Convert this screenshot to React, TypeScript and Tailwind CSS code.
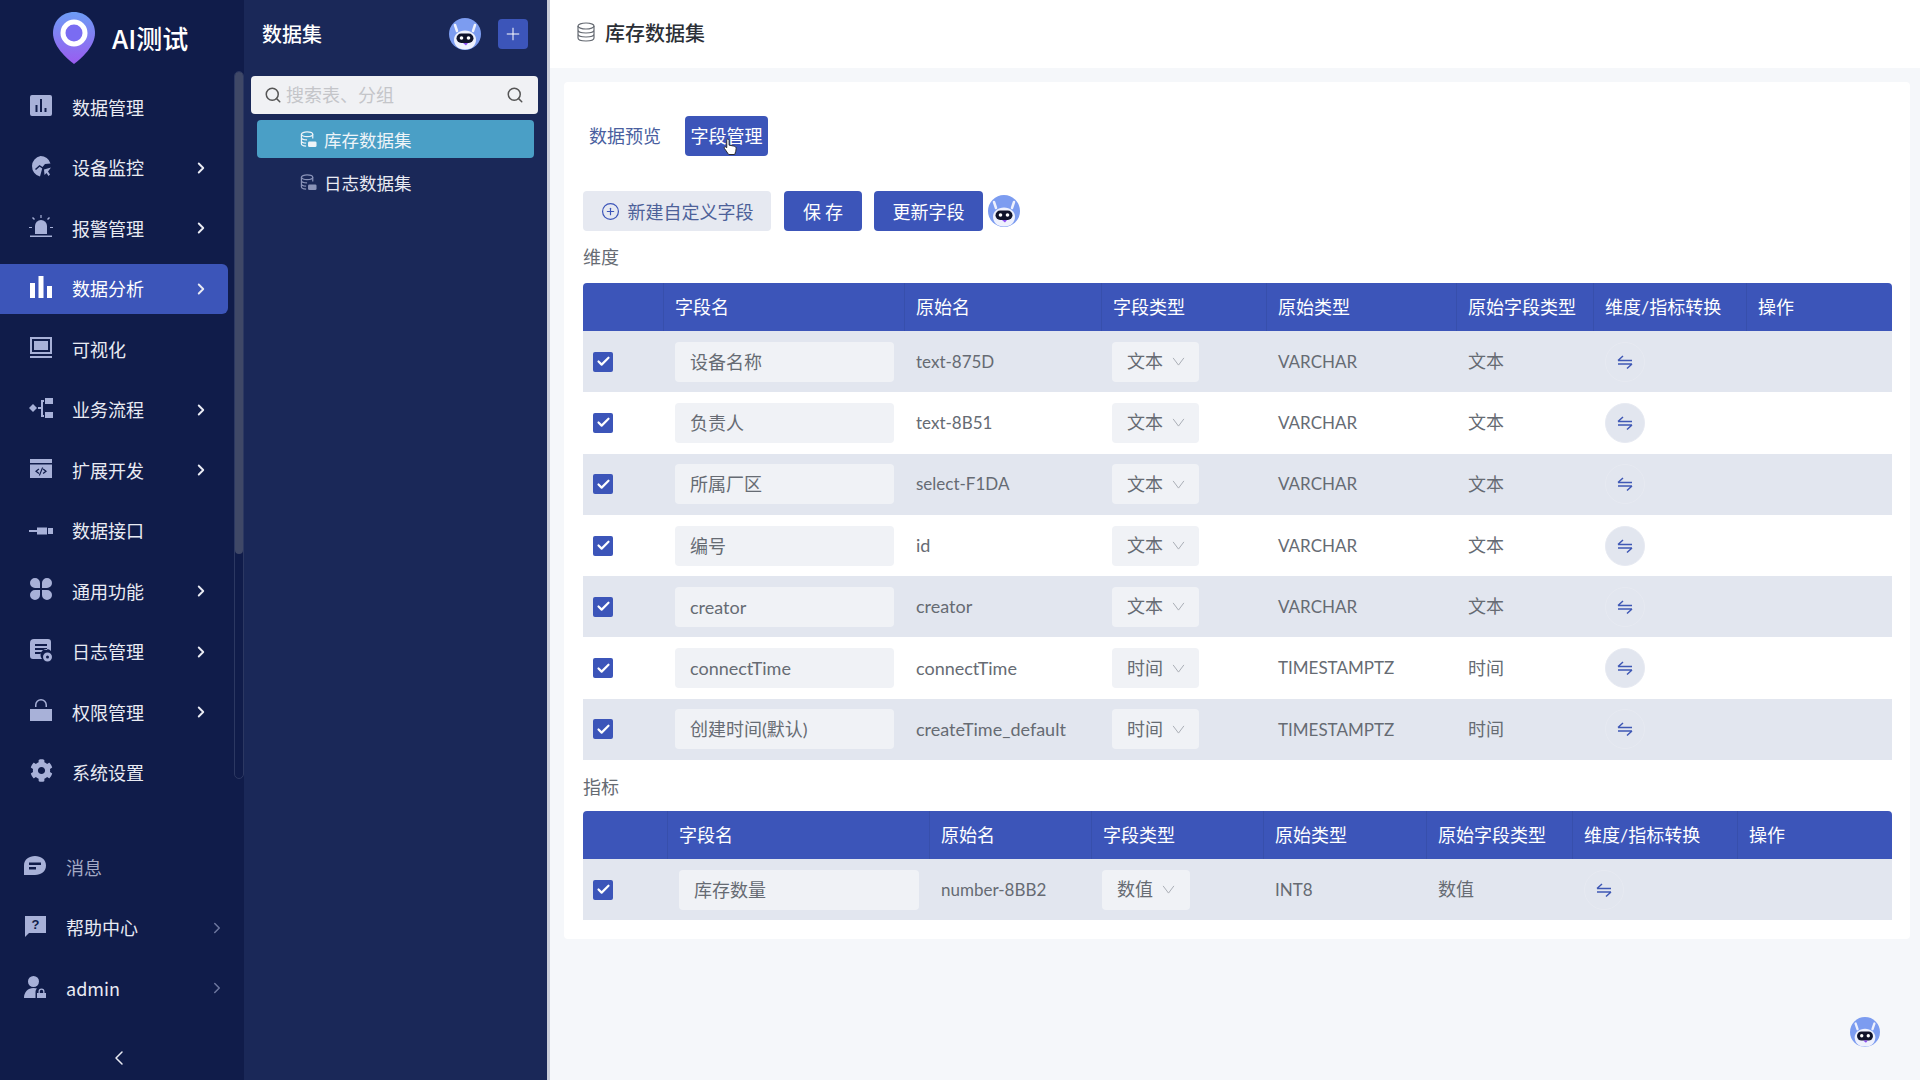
import { Check, ChevronLeft, ChevronRight, CirclePlus, Plus, Search } from "lucide-react";
import { FaCog } from "react-icons/fa";
import type { ReactNode } from "react";

const iconProps = { viewBox: "0 0 24 24", fill: "currentColor", className: "w-[24px] h-[24px]" };

const icons: Record<string, ReactNode> = {
  data: (
    <svg {...iconProps}>
      <path fillRule="evenodd" d="M3 2h18a2 2 0 0 1 2 2v17a2 2 0 0 1-2 2H3a2 2 0 0 1-2-2V4a2 2 0 0 1 2-2Zm3.500 10v7h2v-7Zm4.500-6v13h2V6Zm4.500 9v4h2v-4Z" />
    </svg>
  ),
  monitor: (
    <svg {...iconProps}>
      <path d="M11.500 2a10.500 10.500 0 0 1 10 7.500L16 10l-2.500 3-3-2L6 15l1 1 3.700-3.300 2.500 1.700L11 22.500A10.500 10.500 0 0 1 11.500 2Z" />
      <path d="M15 15.500l7-2-3 4 2 3-1.500 1.500-2-3-2 2Z" />
    </svg>
  ),
  alarm: (
    <svg {...iconProps}>
      <path d="M6 20v-8a6 6 0 0 1 12 0v8Z" />
      <path d="M1 21.500h22V23H1ZM11.400 1h1.200v3h-1.200ZM3 4l1-1 2 2-1 1ZM21 4l-1-1-2 2 1 1ZM0 13h3v1H0ZM21 13h3v1h-3Z" />
    </svg>
  ),
  analysis: (
    <svg {...iconProps}>
      <path d="M1 8h5v15H1ZM9.500 1h5v22h-5ZM18 11h5v12h-5Z" />
    </svg>
  ),
  visual: (
    <svg {...iconProps}>
      <path fillRule="evenodd" d="M1 2h22v17H1Zm2 2v13h18V4Zm2 2h14v9H5ZM1 21h22v2H1Z" />
    </svg>
  ),
  flow: (
    <svg {...iconProps}>
      <path d="M0 12l4-4 4 4-4 4ZM16 2h8v6h-8ZM16 16h8v6h-8Z" />
      <path d="M9 11h3V4h3v2h-1v5h0v2h0v6h1v2h-3v-8H9Z" />
    </svg>
  ),
  ext: (
    <svg {...iconProps}>
      <path fillRule="evenodd" d="M1 3h22v4H1Zm0 5.500h22V22H1Zm8.500 4L6 15.250 9.500 18l.8-1-2.300-1.750L10.300 13.500Zm5 0-.8 1 2.300 1.750-2.300 1.750.8 1 3.500-2.750ZM13 11.500l-3.200 8h1.200l3.200-8Z" />
    </svg>
  ),
  api: (
    <svg {...iconProps}>
      <path d="M0 13h8v2H0ZM8 10.500h10v7H8ZM19 11h5v6h-5Z" />
    </svg>
  ),
  common: (
    <svg {...iconProps}>
      <path d="M6 1a5 5 0 0 1 5 5v5H6A5 5 0 0 1 6 1ZM18 1a5 5 0 0 1 0 10h-5V6a5 5 0 0 1 5-5ZM6 13h5v5a5 5 0 1 1-5-5ZM13 13h5a5 5 0 1 1-5 5Z" />
    </svg>
  ),
  log: (
    <svg {...iconProps}>
      <path fillRule="evenodd" d="M5 1h14a3 3 0 0 1 3 3v9a6 6 0 0 0-9 8H4a3 3 0 0 1-3-3V5a4 4 0 0 1 4-4Zm1 5v2h12V6Zm0 4v2h12v-2Zm0 4v2h6v-2Z" />
      <path fillRule="evenodd" d="M18.500 14.500a4.500 4.500 0 1 1 0 9 4.500 4.500 0 0 1 0-9Zm0 3a1.500 1.500 0 1 0 0 3 1.500 1.500 0 0 0 0-3Z" />
    </svg>
  ),
  perm: (
    <svg {...iconProps}>
      <path d="M1 11h22v12H1Z" />
      <path d="M6 9V7a6 6 0 0 1 12 0v2h-1.500V7a4.500 4.500 0 0 0-9 0v2Z" />
    </svg>
  ),
  settings: <FaCog className="w-[23px] h-[23px]" />,
  msg: (
    <svg {...iconProps}>
      <path fillRule="evenodd" d="M12 2c6 0 11 3.500 11 9.500S18 21 12 21H1v-9.500C1 5.500 6 2 12 2ZM6 8.500V11h12V8.500Zm0 4.500v2.500h7V13Z" />
    </svg>
  ),
  help: (
    <svg {...iconProps}>
      <path d="M2 2h21v17H6l-4 4Z" />
      <text x="12.500" y="15" textAnchor="middle" fontSize="13" fontWeight="700" fill="#101c4a" fontFamily="Liberation Sans">?</text>
    </svg>
  ),
  admin: (
    <svg {...iconProps}>
      <circle cx="10.500" cy="6.500" r="5.500" />
      <path d="M1 23c0-6 4-10 9.500-10 1.500 0 2.500.2 3.500.6-1 1-1.500 2-1.500 3.400V23Z" />
      <path fillRule="evenodd" d="M14 18h9v5h-9Zm1.500 0v-1.500a3 3 0 0 1 6 0V18h-1.300v-1.500a1.700 1.700 0 0 0-3.400 0V18Z" />
    </svg>
  ),
};

function Logo() {
  return (
    <svg viewBox="0 0 42 52" className="w-[42px] h-[52px]">
      <defs>
        <linearGradient id="pinFill" x1="0" y1="0" x2="0" y2="1">
          <stop offset="0" stopColor="#6d9cf5" />
          <stop offset="1" stopColor="#9a5cf0" />
        </linearGradient>
      </defs>
      <path d="M21 0c12 0 21 9 21 21 0 13-13 25-21 31C13 46 0 34 0 21 0 9 9 0 21 0Z" fill="url(#pinFill)" />
      <circle cx="21" cy="21" r="11" fill="#7a6cf2" stroke="#ffffff" strokeWidth="5" />
    </svg>
  );
}

function Robot({ size = "w-[32px] h-[32px]" }: { size?: string }) {
  return (
    <svg viewBox="0 0 32 32" className={size}>
      <circle cx="16" cy="16" r="16" fill="#7c9cf0" />
      <path d="M16 31.500c-7 0-11-4-11-10 0-5 5-9 11-9s11 4 11 9c0 6-4 10-11 10Z" fill="#eef1fd" />
      <path d="M8 13 6 7M24 13l2-6" stroke="#eef1fd" strokeWidth="2.500" strokeLinecap="round" />
      <rect x="7.500" y="15.500" width="17" height="9.500" rx="4.700" fill="#10132a" />
      <path d="M14 25h5l-2 2.500Z" fill="#8a4df0" />
      <circle cx="12.500" cy="20" r="1.800" fill="#ffffff" />
      <circle cx="19.500" cy="20" r="1.800" fill="#ffffff" />
    </svg>
  );
}

function DbIcon({ className }: { className: string }) {
  return (
    <svg viewBox="0 0 18 18" fill="none" stroke="currentColor" strokeWidth="1.300" className={className}>
      <ellipse cx="7.500" cy="3.500" rx="6" ry="2.500" />
      <path d="M1.500 3.500v10c0 1.300 2.200 2.300 5 2.500M13.500 3.500V8M1.500 7c0 1.400 2.700 2.500 6 2.500M1.500 10.500c0 1.300 2 2.200 5 2.400" />
      <rect x="8.500" y="11" width="9" height="6" rx="1.500" fill="currentColor" stroke="none" />
    </svg>
  );
}

function SwapIcon() {
  return (
    <svg viewBox="0 0 16 16" fill="none" stroke="#3f58b5" strokeWidth="1.500" className="w-[16px] h-[16px]">
      <path d="M1 6.500h14M1 6.500 6 2M15 10H1M15 10l-5 4.500" />
    </svg>
  );
}

const menu = [
  { label: "数据管理", icon: "data" },
  { label: "设备监控", icon: "monitor", arrow: true },
  { label: "报警管理", icon: "alarm", arrow: true },
  { label: "数据分析", icon: "analysis", arrow: true, active: true },
  { label: "可视化", icon: "visual" },
  { label: "业务流程", icon: "flow", arrow: true },
  { label: "扩展开发", icon: "ext", arrow: true },
  { label: "数据接口", icon: "api" },
  { label: "通用功能", icon: "common", arrow: true },
  { label: "日志管理", icon: "log", arrow: true },
  { label: "权限管理", icon: "perm", arrow: true },
  { label: "系统设置", icon: "settings" },
];

const bottomMenu = [
  { label: "消息", icon: "msg", dim: true },
  { label: "帮助中心", icon: "help", arrow: true },
  { label: "admin", icon: "admin", arrow: true },
];

function Sidebar() {
  return (
    <aside className="relative w-[244px] shrink-0 h-full bg-[#101c4a] flex flex-col">
      <div className="h-[77px] pl-[53px] pt-[12px] flex items-start gap-[17px]">
        <Logo />
        <span className="mt-[9px] text-[26px] leading-[34px] font-medium text-white">AI测试</span>
      </div>

      {menu.map((m) => (
        <div key={m.label} className="h-[60.5px] flex items-center">
          <div
            className={
              "w-[228px] h-[50px] pl-[29px] pr-[18px] flex items-center rounded-r-md " +
              (m.active ? "bg-[#3c55b9] text-white" : "text-[#a8b1d8]")
            }
          >
            <span className="w-[24px] pb-[4px] flex justify-center">{icons[m.icon]}</span>
            <span className={"ml-[19px] flex-1 text-[18px] " + (m.active ? "text-white" : "text-[#e9ebf3]")}>{m.label}</span>
            {m.arrow && <ChevronRight className="w-[18px] h-[18px] text-[#e9ebf3]" strokeWidth={2.5} />}
          </div>
        </div>
      ))}

      <div className="mt-[34px]">
        {bottomMenu.map((m) => (
          <div key={m.label} className="h-[60.5px] pl-[23px] pr-[18px] flex items-center text-[#a8b1d8]">
            <span className="w-[24px] pb-[3px] flex justify-center">{icons[m.icon]}</span>
            <span className={"ml-[19px] flex-1 text-[18px] " + (m.dim ? "text-[#a3a9c4] text-[17px]" : "text-[#e9ebf3]")}>{m.label}</span>
            {m.arrow && <ChevronRight className="w-[18px] h-[18px] text-[#6d779f]" />}
          </div>
        ))}
      </div>

      <div className="mt-[27px] flex justify-center pr-[6px]">
        <ChevronLeft className="w-[24px] h-[24px] text-[#e9ebf3]" strokeWidth={1.5} />
      </div>

      {/* scrollbar sits on top of the menu */}
      <div className="absolute left-[234px] top-[71px] w-[10px] h-[708px] rounded-full border border-[#2c3862]">
        <div className="w-full h-[482px] rounded-full bg-[#3f4867]" />
      </div>
    </aside>
  );
}

function DatasetPanel() {
  return (
    <section className="w-[303px] shrink-0 h-full bg-[#1a2858] flex flex-col">
      <div className="h-[76px] pl-[18px] pr-[19px] flex items-center pb-[8px]">
        <span className="flex-1 text-[20px] font-medium text-white">数据集</span>
        <Robot />
        <button className="ml-[17px] w-[30px] h-[30px] rounded bg-[#3c55b9] flex items-center justify-center">
          <Plus className="w-[20px] h-[20px] text-white" strokeWidth={1.2} />
        </button>
      </div>
      <div className="ml-[7px] mr-[9px] h-[38px] rounded bg-[#f0f1f4] flex items-center pl-[13px] pr-[14px]">
        <Search className="w-[18px] h-[18px] text-[#555555]" />
        <span className="ml-[4px] pb-[2px] flex-1 text-[18px] text-[#c4c5c9]">搜索表、分组</span>
        <Search className="w-[18px] h-[18px] text-[#555555]" />
      </div>
      <div className="mt-[6px] mx-[13px] h-[38px] rounded bg-[#4a9fc6] pl-[43px] flex items-center text-[#eef4f8]">
        <DbIcon className="w-[17px] h-[17px]" />
        <span className="ml-[7px] pt-[2px] text-[17.500px]">库存数据集</span>
      </div>
      <div className="mt-[5px] mx-[13px] h-[38px] pl-[43px] flex items-center text-[#8a93b8]">
        <DbIcon className="w-[17px] h-[17px]" />
        <span className="ml-[7px] pt-[2px] text-[17.500px] text-[#e9ebf3]">日志数据集</span>
      </div>
    </section>
  );
}

type Field = { name: string; origin: string; type: string; rawType: string; rawFieldType: string };

const dimensions: Field[] = [
  { name: "设备名称", origin: "text-875D", type: "文本", rawType: "VARCHAR", rawFieldType: "文本" },
  { name: "负责人", origin: "text-8B51", type: "文本", rawType: "VARCHAR", rawFieldType: "文本" },
  { name: "所属厂区", origin: "select-F1DA", type: "文本", rawType: "VARCHAR", rawFieldType: "文本" },
  { name: "编号", origin: "id", type: "文本", rawType: "VARCHAR", rawFieldType: "文本" },
  { name: "creator", origin: "creator", type: "文本", rawType: "VARCHAR", rawFieldType: "文本" },
  { name: "connectTime", origin: "connectTime", type: "时间", rawType: "TIMESTAMPTZ", rawFieldType: "时间" },
  { name: "创建时间(默认)", origin: "createTime_default", type: "时间", rawType: "TIMESTAMPTZ", rawFieldType: "时间" },
];

const measures: Field[] = [
  { name: "库存数量", origin: "number-8BB2", type: "数值", rawType: "INT8", rawFieldType: "数值" },
];

const headers = ["", "字段名", "原始名", "字段类型", "原始类型", "原始字段类型", "维度/指标转换", "操作"];

function FieldTable({ rows, cols, selectW }: { rows: Field[]; cols: string; selectW: string }) {
  return (
    <div className="text-[18px] text-[#666b73] font-['Lato','Noto_Sans_CJK_SC',sans-serif]">
      <div className={"grid h-[48px] rounded-t bg-[#3c55b9] text-white items-center " + cols}>
        {headers.map((h, i) => (
          <div key={i} className="h-full pl-[11px] leading-[48px] whitespace-nowrap border-r border-[#374fac] last:border-r-0">{h}</div>
        ))}
      </div>
      {rows.map((r, i) => (
        <div key={r.name} className={"grid h-[61.300px] items-center " + cols + (i % 2 === 0 ? " bg-[#e2e6ef]" : " bg-white")}>
          <div className="pl-[10px]">
            <span className="w-[20px] h-[20px] rounded-[2px] bg-[#3c55b9] flex items-center justify-center">
              <Check className="w-[15px] h-[15px] text-white" strokeWidth={3.5} />
            </span>
          </div>
          <div className="px-[11px]">
            <div className="h-[40px] pl-[15px] rounded bg-[#f0f2f6] leading-[40px]">{r.name}</div>
          </div>
          {/* names with a code in them run a bit narrower in the picture */}
          <div className={"pl-[11px] whitespace-nowrap " + (r.origin.includes("-") ? "text-[17px]" : "")}>{r.origin}</div>
          <div className="pl-[10px]">
            <div className={"h-[40px] rounded bg-[#f0f2f6] pl-[15px] flex items-center gap-[9px] " + selectW}>
              {r.type}
              <svg viewBox="0 0 14 10" fill="none" stroke="#a9adb5" strokeWidth="1.100" className="w-[13px] h-[9px]">
                <path d="M1 1l6 8 6-8" />
              </svg>
            </div>
          </div>
          <div className="pl-[11px] text-[17px]">{r.rawType}</div>
          <div className="pl-[11px]">{r.rawFieldType}</div>
          <div className="pl-[11px]">
            <span className="w-[40px] h-[40px] rounded-full flex items-center justify-center bg-[#e2e6ef] border border-[#e7eaf2]">
              <SwapIcon />
            </span>
          </div>
          <div />
        </div>
      ))}
    </div>
  );
}

function Main() {
  return (
    <main className="relative flex-1 h-full bg-[#f5f7fa] border-l-[3px] border-[#c9cdd9] flex flex-col">
      <header className="h-[68px] shrink-0 bg-white pl-[27px] flex items-center text-[#666b73]">
        <svg viewBox="0 0 18 20" fill="none" stroke="currentColor" strokeWidth="1.200" className="w-[18px] h-[20px] mb-[4px]">
          <ellipse cx="9" cy="4" rx="8" ry="3" />
          <path d="M1 4v12c0 1.700 3.600 3 8 3s8-1.300 8-3V4M1 8c0 1.700 3.600 3 8 3s8-1.300 8-3M1 12c0 1.700 3.600 3 8 3s8-1.300 8-3" />
        </svg>
        <h1 className="ml-[10px] mb-[2px] text-[20px] font-medium text-[#2b2f36]">库存数据集</h1>
      </header>

      <div className="ml-[14px] mr-[10px] mt-[14px] h-[857px] rounded bg-white pl-[19px] pr-[18px]">
        <div className="pt-[34px] pl-[6px] flex items-center gap-[24px] h-[74px] text-[18px]">
          <span className="text-[#4a5f9f] pb-[2px]">数据预览</span>
          <span className="relative w-[83px] h-[40px] pb-[2px] rounded bg-[#3c55b9] text-white flex items-center justify-center">
            字段管理
            <svg viewBox="0 0 16 20" className="absolute left-[38px] top-[21px] w-[15px] h-[20px]">
              <path d="M5 1.500c1 0 1.500.7 1.500 1.500v5l5 1c1.500.3 2.500 1 2.500 2.500 0 2-.5 4-1.500 6.500H6L1.500 11.500c-.8-1 .5-2.300 1.700-1.500l.8.7V3c0-.8.500-1.500 1-1.500Z" fill="#ffffff" stroke="#222222" strokeWidth="1" />
            </svg>
          </span>
        </div>

        <div className="mt-[35px] h-[40px] flex items-center text-[18px]">
          <button className="w-[188px] h-[40px] rounded bg-[#e6e9f1] text-[#4d6199] flex items-center justify-center gap-[8px]">
            <CirclePlus className="w-[19px] h-[19px] text-[#3c55b9]" strokeWidth={1.5} />
            新建自定义字段
          </button>
          <button className="ml-[13px] w-[78px] h-[40px] rounded bg-[#3c55b9] text-white">保 存</button>
          <button className="ml-[12px] w-[109px] h-[40px] rounded bg-[#3c55b9] text-white">更新字段</button>
          <span className="ml-[5px]"><Robot /></span>
        </div>

        <div className="h-[52px] leading-[50px] text-[18px] text-[#666b73]">维度</div>
        <FieldTable rows={dimensions} cols="grid-cols-[81px_241px_197px_165px_190px_137px_153px_145px]" selectW="w-[87px]" />

        <div className="h-[51px] leading-[52px] text-[18px] text-[#666b73]">指标</div>
        <FieldTable rows={measures} cols="grid-cols-[85px_262px_162px_172px_163px_146px_165px_154px]" selectW="w-[88px]" />
      </div>

      <div className="flex justify-end pr-[40px] mt-[78px]">
        <Robot size="w-[30px] h-[30px]" />
      </div>
    </main>
  );
}

export default function App() {
  return (
    <div className="w-[1920px] h-[1080px] overflow-hidden flex font-['Noto_Sans_CJK_SC','Noto_Sans',sans-serif]">
      <Sidebar />
      <DatasetPanel />
      <Main />
    </div>
  );
}
